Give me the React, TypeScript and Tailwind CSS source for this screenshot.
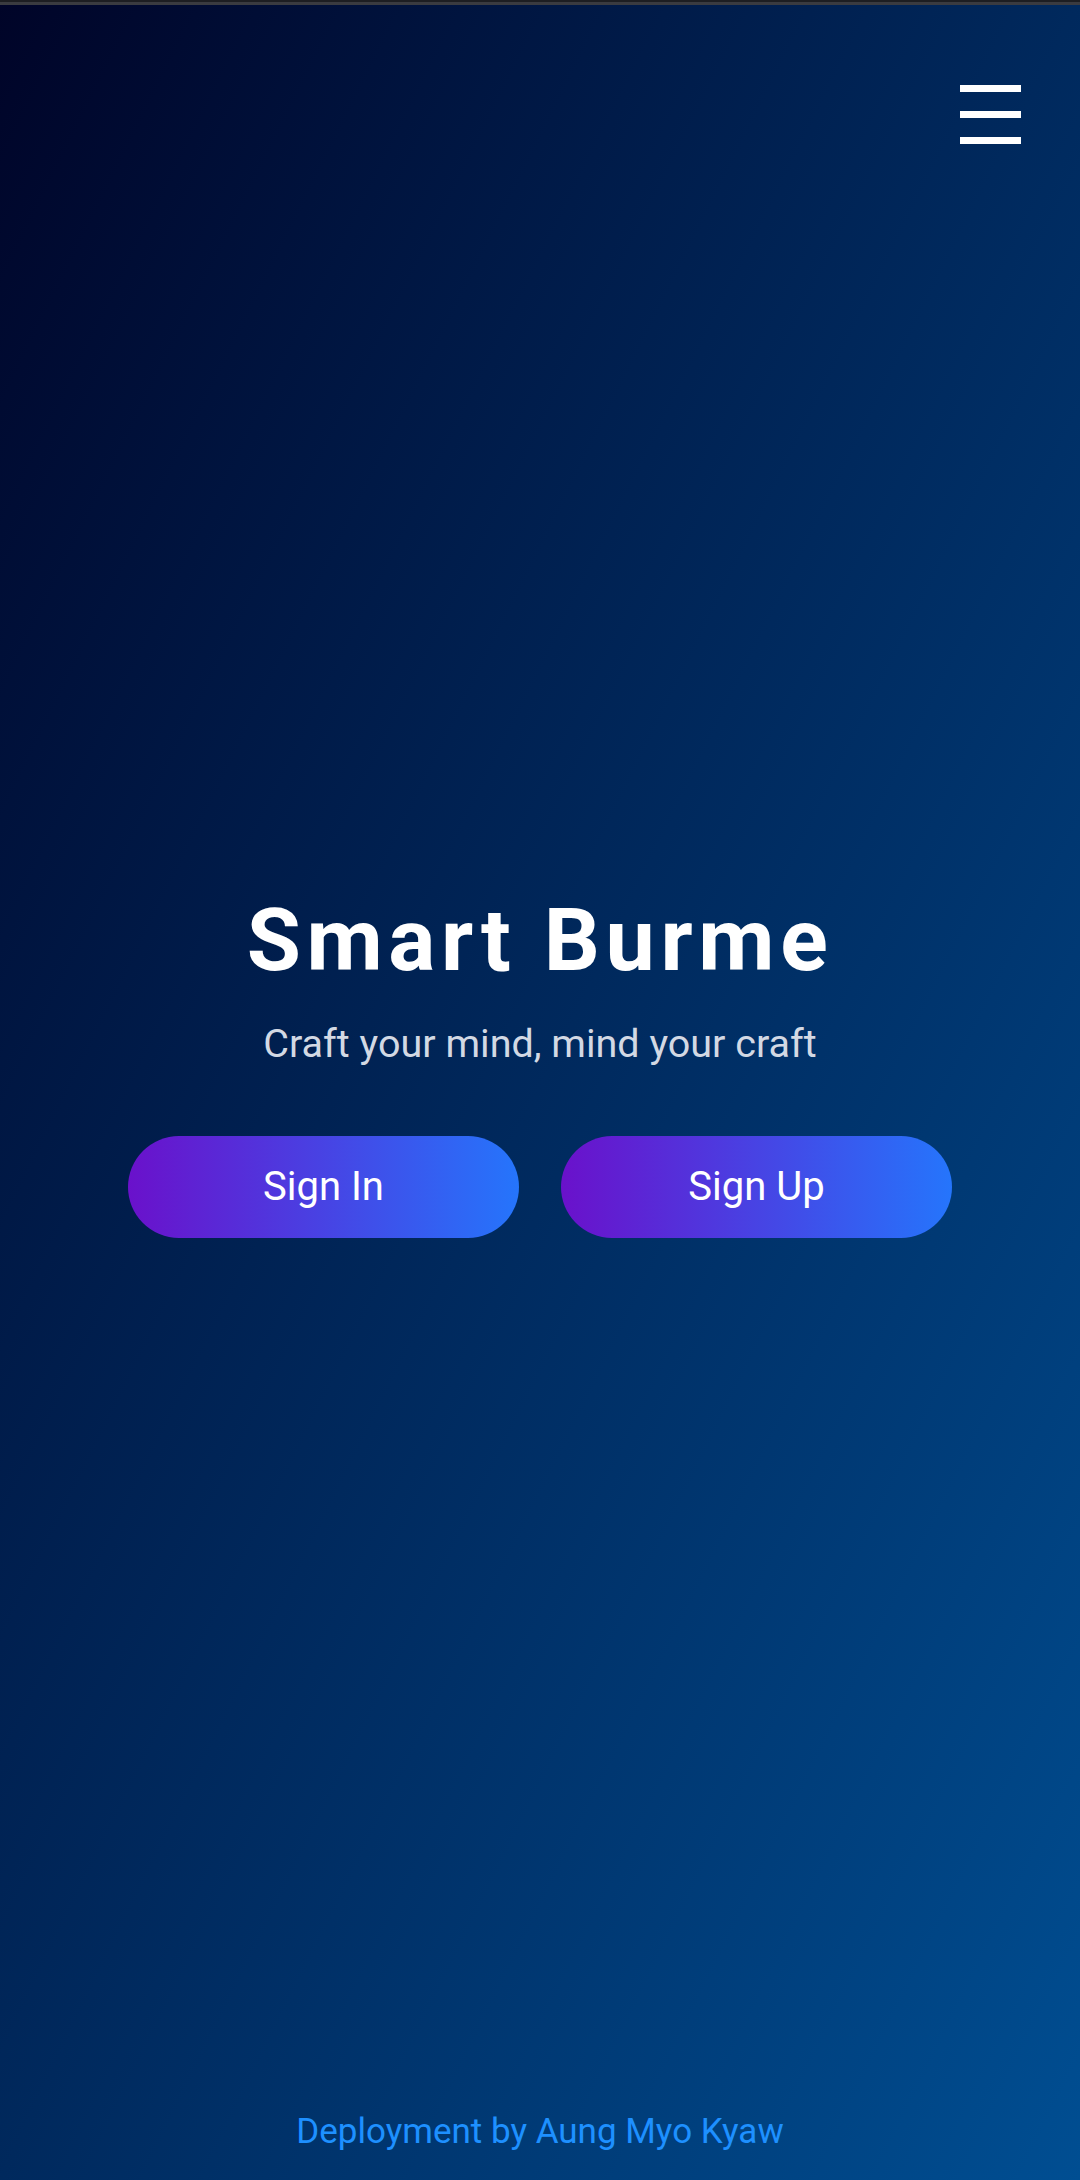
import React from "react";

export default function App() {
  return (
    <div
      className="relative flex min-h-[2180px] w-full flex-col bg-[linear-gradient(to_bottom_right,#000428_0%,#004e92_100%)]"
      style={{ fontFamily: "Roboto, 'Noto Sans', Arial, sans-serif" }}
    >
      <div className="h-[2px] w-full bg-[#1d1e22]" />
      <div className="h-[3px] w-full bg-[#3a3b40]" />
      <header className="flex justify-end pr-[59px] pt-[80px]">
        <button aria-label="menu" className="flex flex-col gap-[19px]">
          <span className="block h-[7px] w-[61px] bg-white" />
          <span className="block h-[7px] w-[61px] bg-white" />
          <span className="block h-[7px] w-[61px] bg-white" />
        </button>
      </header>
      <main className="flex flex-col items-center pt-[752px]">
        <h1 className="text-[88px] font-bold leading-none tracking-[5.6px] text-white">
          Smart Burme
        </h1>
        <p className="mt-[40px] text-[39.5px] leading-none text-[#d3d9e4]">
          Craft your mind, mind your craft
        </p>
        <div className="mt-[72px] flex gap-[42px]">
          <button className="flex h-[102px] w-[391px] items-center justify-center rounded-full bg-[linear-gradient(to_right,#6a11cb,#2575fc)] text-[40px] leading-none text-white">
            Sign In
          </button>
          <button className="flex h-[102px] w-[391px] items-center justify-center rounded-full bg-[linear-gradient(to_right,#6a11cb,#2575fc)] text-[40px] leading-none text-white">
            Sign Up
          </button>
        </div>
      </main>
      <footer className="mt-auto flex justify-center pb-[31px]">
        <p className="text-[35px] leading-none text-[#1e90ff]">
          Deployment by Aung Myo Kyaw
        </p>
      </footer>
    </div>
  );
}
